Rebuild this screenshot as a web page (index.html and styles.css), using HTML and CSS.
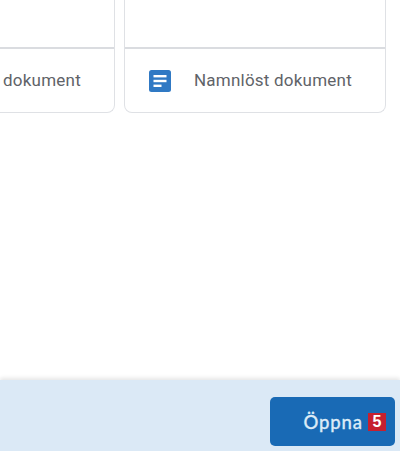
FILE: index.html
```html
<!DOCTYPE html>
<html lang="sv">
<head>
    <meta charset="UTF-8">
    <meta name="viewport" content="width=device-width, initial-scale=1.0">
    <title>Namnlöst dokument</title>
    <link rel="stylesheet" href="styles.css">
</head>
<body>
    <div class="page">
        <div class="docs">
            <div class="card">
                <div class="preview"></div>
                <div class="info">
                    <svg class="doc-icon" viewBox="0 0 22 22" aria-hidden="true">
                        <rect width="22" height="22" rx="2.5" fill="#3079c4"/>
                        <rect x="4.5" y="5" width="13" height="2.4" fill="#fff"/>
                        <rect x="4.5" y="9.8" width="13" height="2.4" fill="#fff"/>
                        <rect x="4.5" y="14.6" width="8" height="2.4" fill="#fff"/>
                    </svg>
                    <span class="doc-name">Namnlöst dokument</span>
                </div>
            </div>
            <div class="card">
                <div class="preview"></div>
                <div class="info">
                    <svg class="doc-icon" viewBox="0 0 22 22" aria-hidden="true">
                        <rect width="22" height="22" rx="2.5" fill="#3079c4"/>
                        <rect x="4.5" y="5" width="13" height="2.4" fill="#fff"/>
                        <rect x="4.5" y="9.8" width="13" height="2.4" fill="#fff"/>
                        <rect x="4.5" y="14.6" width="8" height="2.4" fill="#fff"/>
                    </svg>
                    <span class="doc-name">Namnlöst dokument</span>
                </div>
            </div>
        </div>
        <div class="footer">
            <button class="open-btn">Öppna<span class="badge">5</span></button>
        </div>
    </div>
</body>
</html>
```

FILE: styles.css
```css
* {
    margin: 0;
    padding: 0;
    box-sizing: border-box;
}
body {
    background-color: #fff;
    overflow: hidden;
}
.page {
    display: flex;
    flex-direction: column;
    height: 451px;
}
.docs {
    flex: 1;
    display: flex;
    align-items: flex-start;
    gap: 9px;
    margin-left: -147px;
}
.card {
    flex: none;
    width: 262px;
    height: 113px;
    display: flex;
    flex-direction: column;
    background-color: #fff;
    border: 1px solid #dfe1e5;
    border-top: 0;
    border-radius: 0 0 8px 8px;
}
.preview {
    height: 49px;
    border-bottom: 2px solid #dadce0;
}
.info {
    flex: 1;
    display: flex;
    align-items: center;
    padding: 0 0 0 24px;
}
.doc-icon {
    width: 22px;
    height: 22px;
    flex: none;
}
.doc-name {
    margin-left: 23px;
    margin-bottom: 2px;
    font-family: Roboto, sans-serif;
    font-size: 17px;
    letter-spacing: 0.22px;
    color: #5f6368;
    white-space: nowrap;
}
.footer {
    flex: none;
    height: 71px;
    display: flex;
    justify-content: flex-end;
    align-items: flex-start;
    padding: 17px 5px 0 0;
    background-color: #dbe9f6;
    box-shadow: 0 -2px 4px rgba(0, 0, 0, 0.1);
}
.open-btn {
    width: 125px;
    height: 49px;
    display: flex;
    align-items: center;
    justify-content: flex-end;
    gap: 5px;
    padding-right: 9px;
    border: 0;
    border-radius: 5px;
    background-color: #196ab5;
    color: #dcebf7;
    font-family: Lato, sans-serif;
    font-size: 18.5px;
    font-weight: 500;
    letter-spacing: 0.9px;
    -webkit-text-stroke: 0.3px #dcebf7;
}
.badge {
    width: 18px;
    height: 18px;
    display: flex;
    align-items: center;
    justify-content: center;
    background-color: #c6202f;
    color: #fff;
    font-family: "Liberation Sans", sans-serif;
    font-size: 16px;
    font-weight: 700;
    letter-spacing: 0;
    -webkit-text-stroke: 0;
}
```
